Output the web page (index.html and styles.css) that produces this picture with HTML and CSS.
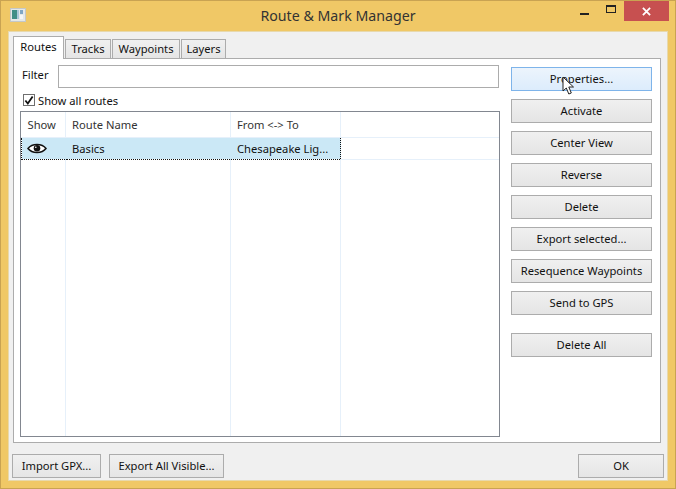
FILE: index.html
```html
<!DOCTYPE html>
<html lang="en">
<head>
    <meta charset="UTF-8">
    <title>Route &amp; Mark Manager</title>
    <link rel="stylesheet" href="styles.css">
</head>
<body>

<div class="window">
    <div class="titlebar">
        <svg class="app-icon" width="16" height="14" viewBox="0 0 16 14">
            <rect x="0.5" y="0.5" width="15" height="13" fill="#e4e8e8" stroke="#c4c8c8"/>
            <rect x="2" y="2" width="5" height="9" fill="#3f8f86"/>
            <rect x="7" y="2" width="2" height="9" fill="#a8c8d8"/>
            <rect x="10" y="2" width="3" height="4" fill="#7fa6c4"/>
            <rect x="10" y="7" width="3" height="4" fill="#f4f6f6"/>
        </svg>
        <div class="title">Route &amp; Mark Manager</div>
        <div class="controls">
            <div class="ctl ctl-min"><span></span></div>
            <div class="ctl ctl-max"><span></span></div>
            <div class="ctl ctl-close">
                <svg width="9" height="9" viewBox="0 0 10 10">
                    <path d="M1 1 L9 9 M9 1 L1 9" stroke="#fff" stroke-width="2"/>
                </svg>
            </div>
        </div>
    </div>

    <div class="client">
        <div class="tabs">
            <div class="tab active">Routes</div>
            <div class="tab tab-tracks">Tracks</div>
            <div class="tab tab-waypoints">Waypoints</div>
            <div class="tab tab-layers">Layers</div>
        </div>

        <div class="panel">
            <div class="left">
                <div class="filter-row">
                    <label class="filter-label" for="filter">Filter</label>
                    <input class="filter-input" type="text" id="filter">
                </div>
                <div class="check-row">
                    <span class="checkbox">
                        <svg width="11" height="11" viewBox="0 0 11 11">
                            <path d="M1.5 5.5 L4.2 8.8 L9.5 1.2" fill="none" stroke="#111" stroke-width="2"/>
                        </svg>
                    </span>
                    <span>Show all routes</span>
                </div>
                <div class="list">
                    <table class="routes">
                        <tr class="head">
                            <td class="c-show">Show</td>
                            <td class="c-name">Route Name</td>
                            <td class="c-from">From &lt;-&gt; To</td>
                            <td></td>
                        </tr>
                        <tr class="selected">
                            <td class="c-show">
                                <svg class="eye" width="20" height="13" viewBox="0 0 20 13">
                                    <path d="M1 6.5 C5 1.2 15 1.2 19 6.5 C15 11.8 5 11.8 1 6.5 Z" fill="#fff" stroke="#111" stroke-width="1.5"/>
                                    <circle cx="10" cy="6.3" r="3.3" fill="#111"/>
                                    <circle cx="8.8" cy="5.2" r="0.8" fill="#fff"/>
                                </svg>
                            </td>
                            <td class="c-name">Basics</td>
                            <td class="c-from">Chesapeake Lig...</td>
                            <td class="c-rest"></td>
                        </tr>
                        <tr class="filler">
                            <td></td><td></td><td></td><td></td>
                        </tr>
                    </table>
                </div>
            </div>

            <div class="right">
                <div class="btn hover">Properties...</div>
                <div class="btn">Activate</div>
                <div class="btn">Center View</div>
                <div class="btn">Reverse</div>
                <div class="btn">Delete</div>
                <div class="btn">Export selected...</div>
                <div class="btn">Resequence Waypoints</div>
                <div class="btn">Send to GPS</div>
                <div class="btn btn-apart">Delete All</div>
            </div>
        </div>

        <div class="footer">
            <div class="btn btn-import">Import GPX...</div>
            <div class="btn btn-export">Export All Visible...</div>
            <div class="btn btn-ok">OK</div>
        </div>
    </div>

    <!-- mouse pointer, lies over the Properties button -->
    <svg class="pointer" width="13" height="20" viewBox="0 0 13 20">
        <path d="M1 1 L1 15 L4.3 12 L6.8 18 L9.3 17 L6.8 11 L11.5 11 Z" fill="#fff" stroke="#222" stroke-width="1"/>
    </svg>
</div>

</body>
</html>
```

FILE: styles.css
```css
/* Window frame */
* {
    margin: 0;
    padding: 0;
    box-sizing: border-box;
}

body {
    font-family: "Noto Sans", "Open Sans", sans-serif;
    font-size: 11.2px;
    color: #111;
    background-color: #fff;
}

.window {
    position: relative;
    width: 676px;
    height: 489px;
    background-color: #f0c866;
    border: 1px solid #c9a352;
    padding: 0 7px 7px 7px;
    display: flex;
    flex-direction: column;
    overflow: hidden;
}

.titlebar {
    height: 30px;
    flex: none;
    display: flex;
    align-items: flex-start;
}

.app-icon {
    margin: 7px 0 0 2px;
    flex: none;
}

.title {
    flex: 1;
    text-align: center;
    font-size: 14.2px;
    line-height: 30px;
    color: #333;
    padding-left: 78px;
}

.controls {
    display: flex;
    flex: none;
    margin-right: -1px;
}

.ctl {
    height: 20px;
    display: flex;
    align-items: center;
    justify-content: center;
}

.ctl-min {
    width: 26px;
}

.ctl-min span {
    width: 9px;
    height: 2px;
    margin: 6px 2px 0 0;
    background-color: #222;
}

.ctl-max {
    width: 26px;
}

.ctl-max span {
    width: 10px;
    height: 8px;
    border: 1px solid #222;
    border-top-width: 2px;
    margin-top: -4px;
}

.ctl-close {
    width: 45px;
    background-color: #c75050;
}

/* Client area */
.client {
    flex: 1;
    background-color: #f0f0f0;
    border: 1px solid #e8d9ac;
    display: flex;
    flex-direction: column;
    padding: 4px 6px 0 4px;
}

.tabs {
    display: flex;
    align-items: flex-end;
    height: 23px;
    flex: none;
    margin-bottom: -1px;
    position: relative;
}

.tab {
    height: 20px;
    line-height: 17px;
    text-align: center;
    background: linear-gradient(#f0f0f0, #e5e5e5);
    border: 1px solid #acacac;
    border-left: 1px solid #acacac;
    margin-right: 1px;
}

.tab.active {
    width: 51px;
    height: 23px;
    line-height: 20px;
    background: #fff;
    border-bottom: none;
    position: relative;
    z-index: 1;
}

.tab-tracks {
    width: 46px;
}

.tab-waypoints {
    width: 68px;
}

.tab-layers {
    width: 45px;
}

.panel {
    height: 385px;
    flex: none;
    background-color: #fff;
    border: 1px solid #acacac;
    display: flex;
    padding: 6px 8px 5px 6px;
    gap: 11px;
}

.left {
    flex: 1;
    display: flex;
    flex-direction: column;
}

.filter-row {
    display: flex;
    align-items: center;
    height: 23px;
    flex: none;
    padding-left: 2px;
}

.filter-label {
    width: 36px;
    margin-top: -5px;
}

.filter-input {
    width: 441px;
    height: 23px;
    border: 1px solid #acacac;
    background-color: #fff;
}

.check-row {
    display: flex;
    align-items: center;
    gap: 3px;
    height: 16px;
    margin-top: 4px;
    padding-left: 3px;
    flex: none;
}

.checkbox {
    width: 12px;
    height: 12px;
    border: 1px solid #6f6f6f;
    background-color: #fff;
    display: flex;
    align-items: center;
    justify-content: center;
}

/* Route list */
.list {
    flex: 1;
    margin-top: 3px;
    border: 1px solid #828790;
    background-color: #fff;
    min-height: 0;
}

.routes {
    width: 100%;
    height: 100%;
    border-collapse: collapse;
    table-layout: fixed;
}

.routes td {
    padding: 0 0 0 6px;
    border-right: 1px solid #e6f0fa;
    vertical-align: middle;
    white-space: nowrap;
}

.routes td:last-child {
    border-right: none;
}

.c-show {
    width: 44px;
}

.c-name {
    width: 165px;
}

.c-from {
    width: 110px;
}

.head td {
    height: 25px;
    border-bottom: 1px solid #e6f0fa;
    color: #333;
}

.selected td {
    height: 22px;
    background-color: #cbe8f6;
    border-top: 1px dotted #111;
    border-bottom: 1px dotted #111;
    border-right-color: #cbe8f6;
}

.selected td.c-show {
    border-left: 1px dotted #111;
}

.selected td.c-from {
    border-right: 1px dotted #111;
}

.selected td.c-rest {
    background-color: #fff;
    border-top: none;
    border-bottom: 1px solid #e6f0fa;
}

.eye {
    display: block;
    margin-left: -1px;
}

/* Buttons */
.right {
    width: 141px;
    flex: none;
    display: flex;
    flex-direction: column;
    gap: 8px;
    padding-top: 2px;
}

.btn {
    height: 24px;
    flex: none;
    line-height: 22px;
    text-align: center;
    background: linear-gradient(#f0f0f0, #e5e5e5);
    border: 1px solid #acacac;
    white-space: nowrap;
}

.btn.hover {
    background: linear-gradient(#ecf4fc, #dcecfc);
    border-color: #7eb4ea;
}

.btn-apart {
    margin-top: 10px;
}

.footer {
    display: flex;
    padding-top: 11px;
    margin-left: -1px;
    margin-right: -3px;
}

.btn-import {
    width: 89px;
}

.btn-export {
    width: 115px;
    margin-left: 8px;
}

.btn-ok {
    width: 86px;
    margin-left: auto;
}

.pointer {
    position: absolute;
    left: 561px;
    top: 75px;
}
```
